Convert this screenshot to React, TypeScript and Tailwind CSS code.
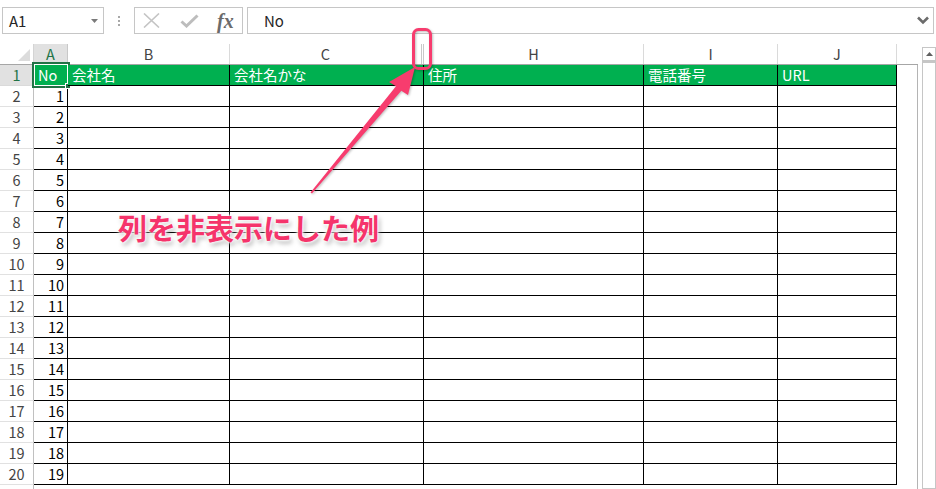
const columns = [
  { key: "A", width: "w-[34px]", title: "No" },
  { key: "B", width: "w-[162px]", title: "会社名" },
  { key: "C", width: "w-[194px]", title: "会社名かな" },
  { key: "H", width: "w-[220px]", title: "住所" },
  { key: "I", width: "w-[134px]", title: "電話番号" },
  { key: "J", width: "w-[119px]", title: "URL" },
];

const rowNumbers = Array.from({ length: 20 }, (_, i) => i + 1);

function FormulaBar() {
  return (
    <div className="flex h-[44px] items-start pt-[7px]">
      <div className="ml-[2px] flex h-[27px] w-[102px] items-center justify-between border border-[#c6c6c6] pl-[6px] pr-[5px]">
        <span className="text-[15px] leading-none text-[#262626]">A1</span>
        <svg width="7" height="4" viewBox="0 0 7 4">
          <path d="M0 0H7L3.5 4Z" fill="#7a7a7a" />
        </svg>
      </div>
      <div className="flex h-[27px] w-[30px] flex-col items-center justify-center gap-[2px]">
        <span className="h-[2px] w-[2px] bg-[#a8a8a8]" />
        <span className="h-[2px] w-[2px] bg-[#a8a8a8]" />
        <span className="h-[2px] w-[2px] bg-[#a8a8a8]" />
      </div>
      <div className="flex h-[27px] w-[109px] items-center border border-[#c6c6c6] pl-[8px]">
        <svg width="17" height="15" viewBox="0 0 17 15">
          <path d="M1 0.5L16 14.5M16 0.5L1 14.5" stroke="#c4c4c4" strokeWidth="1.6" fill="none" />
        </svg>
        <svg className="ml-[20px]" width="19" height="14" viewBox="0 0 19 14">
          <path d="M1.5 7.5L6.5 12L17.5 1.5" stroke="#bdbdbd" strokeWidth="3" fill="none" />
        </svg>
        <span className="ml-[18px] font-['Liberation_Serif',serif] text-[20px] font-bold leading-none italic text-[#6b6b6b]">
          fx
        </span>
      </div>
      <div className="ml-[4px] mr-[2px] flex h-[27px] flex-1 items-center justify-between border border-[#c6c6c6] pl-[16px] pr-[4px]">
        <span className="text-[15px] leading-none text-[#262626]">No</span>
        <svg width="12" height="9" viewBox="0 0 12 9">
          <path d="M1 1.5L6 6.5L11 1.5" stroke="#6b6b6b" strokeWidth="2.6" fill="none" />
        </svg>
      </div>
    </div>
  );
}

function ColumnHeader() {
  return (
    <div className="flex h-[21px] border-b border-[#a6a6a6]">
      <div className="flex w-[34px] items-end justify-end border-r border-[#d4d4d4] pb-[3px] pr-[3px]">
        <svg width="12" height="12" viewBox="0 0 12 12">
          <path d="M12 0V12H0Z" fill="#dcdcdc" />
        </svg>
      </div>
      {columns.map((col) =>
        col.key === "C" ? (
          <div className="flex w-[194px]" key={col.key}>
            <div className="flex w-[191px] items-center justify-center text-[#444]">C</div>
            <div className="w-[3px] border-x border-[#c8c8c8]" />
          </div>
        ) : (
          <div
            className={
              col.key === "A"
                ? "flex w-[34px] items-center justify-center border-r border-[#c8c8c8] bg-[#e1e1e1] text-[#217346]"
                : `flex ${col.width} items-center justify-center border-r border-[#dadada] text-[#444]`
            }
            key={col.key}
          >
            {col.key}
          </div>
        )
      )}
      <div className="w-[21px]" />
    </div>
  );
}

function SheetRow({ n }: { n: number }) {
  const isHeader = n === 1;
  return (
    <div className="flex h-[21px]">
      <div
        className={
          isHeader
            ? "flex w-[34px] items-center justify-center border-r border-b border-r-[#c0c0c0] border-b-[#dadada] bg-[#e1e1e1] text-[#217346]"
            : "flex w-[34px] items-center justify-center border-r border-b border-r-[#c0c0c0] border-b-[#e1e1e1] text-[#444]"
        }
      >
        {n}
      </div>
      {columns.map((col) => {
        if (isHeader) {
          return (
            <div
              className={`relative flex ${col.width} items-center border-r border-b border-black bg-[#00b050] pl-[4px] text-white`}
              key={col.key}
            >
              {col.title}
              {col.key === "A" && (
                <div className="absolute -left-[2px] -top-[3px] -right-[3px] -bottom-[3px] border-2 border-[#217346]">
                  <div className="h-full w-full border border-white" />
                  <div className="absolute -bottom-[3px] -right-[3px] h-[6px] w-[6px] border border-white bg-[#217346]" />
                </div>
              )}
            </div>
          );
        }
        return (
          <div
            className={`flex ${col.width} items-center justify-end border-r border-b border-black pr-[3px] text-black`}
            key={col.key}
          >
            {col.key === "A" ? n - 1 : ""}
          </div>
        );
      })}
      <div className="w-[21px] border-r border-[#b4b4b4]" />
    </div>
  );
}

function Scrollbar() {
  return (
    <div className="ml-[4px] flex w-[14px] flex-col pt-[3px]">
      <div className="flex h-[14px] items-center justify-center border border-[#c6c6c6]">
        <svg width="7" height="4" viewBox="0 0 7 4">
          <path d="M0 4H7L3.5 0Z" fill="#606060" />
        </svg>
      </div>
      <div className="flex-1 border-x border-b border-t-2 border-[#c6c6c6]" />
    </div>
  );
}

function Annotation() {
  return (
    <>
      <svg className="pointer-events-none absolute inset-0 [filter:drop-shadow(1px_1px_1px_rgba(0,0,0,0.25))]" width="936" height="489">
        <path
          d="M310.5 192.5L396 86.3L389 82L415 67L408 95L401.3 90.8L312 193.5Z"
          fill="#f73c6e"
        />
        <rect x="413.5" y="29.5" width="17" height="39" rx="5" fill="none" stroke="#f73c6e" strokeWidth="3" />
      </svg>
      <div className="pointer-events-none absolute left-[118px] top-[213px] text-[29px] font-bold leading-none text-[#f5346b] [text-shadow:0_0_2px_#fff,0_0_3px_#fff,0_0_5px_#fff,2px_3px_5px_rgba(0,0,0,0.35)]">
        列を非表示にした例
      </div>
    </>
  );
}

export default function App() {
  return (
    <div className="relative h-[489px] w-[936px] overflow-hidden bg-white font-['Noto_Sans_CJK_JP',sans-serif] text-[14.5px]">
      <FormulaBar />
      <div className="flex h-[445px]">
        <div className="flex w-[918px] flex-col">
          <ColumnHeader />
          {rowNumbers.map((n) => (
            <SheetRow key={n} n={n} />
          ))}
          <div className="flex flex-1">
            <div className="w-[34px] border-r border-[#c0c0c0]" />
            <div className="flex-1" />
            <div className="w-[21px] border-r border-[#b4b4b4]" />
          </div>
        </div>
        <Scrollbar />
      </div>
      <Annotation />
    </div>
  );
}
